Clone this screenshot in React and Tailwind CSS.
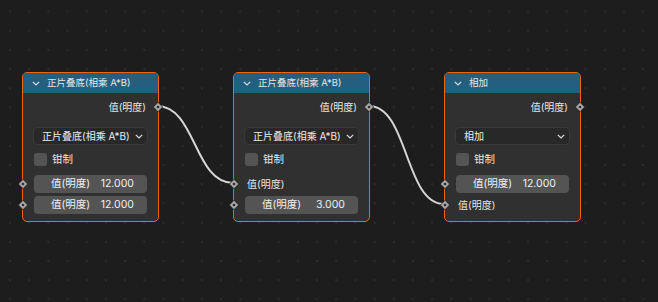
const FONT = { fontFamily: 'Inter, "Noto Sans CJK SC", "DejaVu Sans", sans-serif' };

function Socket() {
  return (
    <svg className="absolute left-0 top-1/2 -translate-x-1/2 -translate-y-1/2" width="11" height="11" viewBox="0 0 11 11">
      <polygon points="5.5,0.8 10.2,5.5 5.5,10.2 0.8,5.5" fill="#a8a8a8" stroke="#1a1a1a" strokeWidth="0.8" />
      <circle cx="5.5" cy="5.5" r="1.3" fill="#2e2e2e" />
    </svg>
  );
}

function OutSocket() {
  return (
    <svg className="absolute right-0 top-1/2 translate-x-1/2 -translate-y-1/2" width="11" height="11" viewBox="0 0 11 11">
      <polygon points="5.5,0.8 10.2,5.5 5.5,10.2 0.8,5.5" fill="#a8a8a8" stroke="#1a1a1a" strokeWidth="0.8" />
      <circle cx="5.5" cy="5.5" r="1.3" fill="#2e2e2e" />
    </svg>
  );
}

function Chevron({ className }) {
  return (
    <svg className={className} width="8" height="5" viewBox="0 0 8 5" fill="none">
      <path d="M0.8 0.8 L4 4 L7.2 0.8" stroke="#dedede" strokeWidth="1.2" />
    </svg>
  );
}

function ValueField({ value }) {
  return (
    <div className="relative h-[18px] px-[11px]">
      <Socket />
      <div className="h-full rounded-[4px] bg-[#545454] flex items-center justify-between pl-[17px] pr-[13px] text-[10.5px] text-[#f0f0f0] whitespace-nowrap">
        <span>值(明度)</span>
        <span>{value}</span>
      </div>
    </div>
  );
}

function InputLabel() {
  return (
    <div className="relative h-[18px] px-[13px] flex items-center text-[10px] text-[#e6e6e6] whitespace-nowrap">
      <Socket />
      <span>值(明度)</span>
    </div>
  );
}

function Node({ x, title, mode, rows }) {
  return (
    <div
      className="absolute top-[72px] w-[137px] h-[150px] rounded-[5px] border border-[#e8661c] bg-[#303030] flex flex-col"
      style={{ left: x }}
    >
      <div className="h-[20px] rounded-t-[4px] bg-[#23607f] flex items-center pl-[9px] gap-[7px] text-[9.5px] text-[#e6e6e6] shrink-0 whitespace-nowrap">
        <Chevron />
        <span>{title}</span>
      </div>
      <div className="relative h-[16px] mt-[6px] pr-[12px] flex items-center justify-end text-[10px] text-[#e6e6e6] whitespace-nowrap">
        <span>值(明度)</span>
        <OutSocket />
      </div>
      <div className="mt-[12px] mx-[10px] h-[18px] rounded-[4px] bg-[#282828] border border-[#3a3a3a] flex items-center justify-between pl-[8px] pr-[4px] text-[10px] text-[#ececec] whitespace-nowrap">
        <span>{mode}</span>
        <Chevron />
      </div>
      <div className="mt-[8px] mx-[11px] h-[13px] flex items-center gap-[5px] text-[10.5px] text-[#e6e6e6]">
        <div className="w-[13px] h-[13px] rounded-[3px] bg-[#545454]" />
        <span>钳制</span>
      </div>
      <div className="mt-[9px] flex flex-col gap-[3px]">
        {rows.map((r, i) =>
          r === "label" ? <InputLabel key={i} /> : <ValueField key={i} value={r} />
        )}
      </div>
    </div>
  );
}

export default function App() {
  return (
    <div
      className="relative w-[658px] h-[302px] overflow-hidden bg-[#1d1d1d] bg-[radial-gradient(circle,#2d2d2d_0.9px,transparent_1.3px)] bg-[size:19.2px_19.2px] bg-[position:0.4px_1.9px]"
      style={FONT}
    >
      <svg className="absolute inset-0" width="658" height="302">
        <path d="M157 106 C 196 106, 194 183, 233 183" stroke="#d6d6d6" strokeWidth="2" fill="none" />
        <path d="M369 106 C 408 106, 405 204, 444 204" stroke="#d6d6d6" strokeWidth="2" fill="none" />
      </svg>
      <Node x={22} title="正片叠底(相乘 A*B)" mode="正片叠底(相乘 A*B)" rows={["12.000", "12.000"]} />
      <Node x={233} title="正片叠底(相乘 A*B)" mode="正片叠底(相乘 A*B)" rows={["label", "3.000"]} />
      <Node x={444} title="相加" mode="相加" rows={["12.000", "label"]} />
    </div>
  );
}
